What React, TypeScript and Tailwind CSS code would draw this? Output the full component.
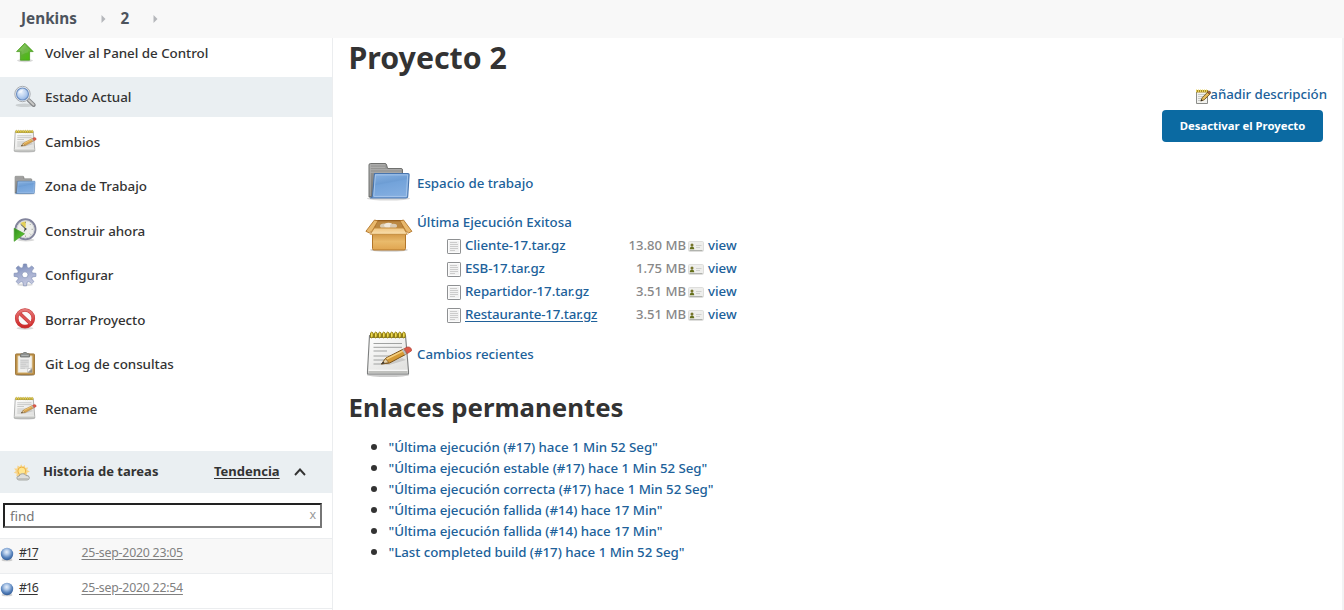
import React from "react";

type IconProps = { className?: string };

function UpArrowIcon({ className }: IconProps) {
  return (
    <svg viewBox="0 0 24 24" className={className}>
      <defs>
        <linearGradient id="up" x1="0" y1="0" x2="1" y2="1">
          <stop offset="0" stopColor="#8fd65c" />
          <stop offset="0.45" stopColor="#5fae35" />
          <stop offset="1" stopColor="#43c400" />
        </linearGradient>
      </defs>
      <ellipse cx="12" cy="20.6" rx="8" ry="1.6" fill="#000" opacity="0.15" />
      <path d="M11.8 3.2 20.2 11.6H16.6V20.2H7.4V11.6H3.6Z" fill="url(#up)" stroke="#4b9a22" strokeWidth="0.8" strokeLinejoin="round" />
      <path d="M11.8 4.8 6 10.7h2.500v4c3-1 4-2.200 7-2.500v-1.500H18Z" fill="#fff" opacity="0.12" />
    </svg>
  );
}

function SearchIcon({ className }: IconProps) {
  return (
    <svg viewBox="0 0 24 24" className={className}>
      <defs>
        <radialGradient id="lens" cx="0.4" cy="0.35" r="0.7">
          <stop offset="0" stopColor="#eaf2fd" />
          <stop offset="0.55" stopColor="#bcd2f0" />
          <stop offset="1" stopColor="#8db1e4" />
        </radialGradient>
      </defs>
      <ellipse cx="11.500" cy="20.300" rx="9" ry="1.800" fill="#000" opacity="0.13" />
      <path d="M15.500 15 20.700 20" stroke="#85878a" strokeWidth="4" strokeLinecap="round" />
      <path d="M16 15.300 20.500 19.600" stroke="#c9c9c7" strokeWidth="2" strokeLinecap="round" />
      <circle cx="9.500" cy="9" r="7.700" fill="#eef0f2" stroke="#a9adb2" strokeWidth="1" />
      <circle cx="9.500" cy="9" r="6" fill="url(#lens)" stroke="#6c8fc2" strokeWidth="1.100" />
      <path d="M5.300 8.600A4.300 4.300 0 0 1 10.500 4.800c-1 2-2.500 3.200-5.200 3.800Z" fill="#fff" opacity="0.6" />
    </svg>
  );
}

function NotepadIcon({ className, id, small }: IconProps & { id: string; small?: boolean }) {
  const rings = small ? [8, 12.5, 17, 21.500, 26, 30.500, 35, 39.500] : [8, 12, 16, 20, 24, 28, 32, 36, 40];
  return (
    <svg viewBox="0 0 48 48" className={className}>
      <defs>
        <linearGradient id={id} x1="0" y1="0" x2="0.6" y2="1">
          <stop offset="0" stopColor="#ffffff" />
          <stop offset="1" stopColor="#e2e2e0" />
        </linearGradient>
      </defs>
      <ellipse cx="23" cy="45" rx="21" ry="2" fill="#000" opacity="0.2" />
      <path
        d="M4.500 5.500H40.500L43.500 41V44H2.500V41Z"
        fill={`url(#${id})`}
        stroke={small ? "#9a9b99" : "#7c7e7e"}
        strokeWidth={small ? 1.500 : 1.100}
        strokeLinejoin="round"
      />
      <path d="M3.500 40.500H42.500V43H3.500Z" fill="#bfc0bd" />
      <path d="M3.500 40.300H42.500" stroke="#fff" strokeWidth="1" />
      <path d="M5 3.500H40.500V8H5Z" fill={small ? "#a99b4e" : "#857b35"} />
      {rings.map((x) => (
        <ellipse
          key={x}
          cx={x - 1.200}
          cy="5"
          rx={small ? 1.500 : 1.400}
          ry={small ? 2.500 : 3}
          fill="#f0dd55"
          stroke={small ? "#b09a2c" : "#8d7809"}
          strokeWidth="0.9"
        />
      ))}
      <path
        d="M8.500 13.500H37M8.500 17.300H37M8.500 21H22M8.500 26H30M8.500 30H24M8.500 34H17"
        stroke={small ? "#b9bbba" : "#a0a2a1"}
        strokeWidth={small ? 1.500 : 1}
        fill="none"
      />
      <path d="M17 34.500 37 28 41 30 24 35Z" fill="#000" opacity="0.13" />
      <path
        d="M16.500 34 21 28 38.500 19 41.500 24 24.500 33Z"
        fill={small ? "#d8a44e" : "#d59a36"}
        stroke={small ? "#a2783e" : "#79521b"}
        strokeWidth="1"
        strokeLinejoin="round"
      />
      <path d="M21.500 29 38.500 20.600" stroke="#f5d080" strokeWidth="1.600" />
      <path d="M16.500 34 20.500 28.600 23.800 32.600Z" fill="#e6d1a8" stroke="#79521b" strokeWidth="0.7" />
      <path d="M16.200 34.300 18.200 31.500 19.800 33.200Z" fill="#333" />
      <path d="M37.800 19.500 40.800 24.500" stroke="#b9bdbe" strokeWidth="2" />
      <path d="M39.200 18.600 42.500 17Q46.600 16.800 46.500 20.800L42.300 23.600Z" fill="#df5947" stroke="#b2453b" strokeWidth="0.8" />
    </svg>
  );
}

function FolderIcon({ className, id }: IconProps & { id: string }) {
  return (
    <svg viewBox="0 0 48 48" className={className}>
      <defs>
        <linearGradient id={id} x1="0" y1="0" x2="0.3" y2="1">
          <stop offset="0" stopColor="#8ab3e2" />
          <stop offset="0.45" stopColor="#6d9dd4" />
          <stop offset="0.5" stopColor="#73a3da" />
          <stop offset="1" stopColor="#82ade0" />
        </linearGradient>
        <linearGradient id={`${id}b`} x1="0" y1="0" x2="0" y2="1">
          <stop offset="0" stopColor="#9b9b99" />
          <stop offset="1" stopColor="#737472" />
        </linearGradient>
      </defs>
      <ellipse cx="23.500" cy="39.500" rx="21.500" ry="2" fill="#000" opacity="0.15" />
      <path d="M4 38V6Q4 4.500 5.500 4.500H20Q21.300 4.500 21.600 6L22.600 9.500H36Q37.500 9.500 37.500 11V38Z" fill={`url(#${id}b)`} stroke="#6f706e" strokeWidth="1" />
      <path d="M5.200 37V5.800H20.300M5.500 8.300H20.300M5.500 10.800H36.500M5.500 13.200H36.500" stroke="#bababa" strokeWidth="0.8" fill="none" />
      <path d="M9.500 14.500H42.800Q44.300 14.500 44.100 16L42.700 37.500Q42.500 39 41 39H5.500Q7.200 38.500 7.500 37Z" fill={`url(#${id})`} stroke="#4875ae" strokeWidth="1.100" strokeLinejoin="round" />
      <path d="M8.800 37 10.400 15.900H42.700L41.300 37.400H9" fill="none" stroke="#aecbee" strokeWidth="0.8" />
    </svg>
  );
}

function ClockIcon({ className }: IconProps) {
  return (
    <svg viewBox="0 0 24 24" className={className}>
      <defs>
        <linearGradient id="play" x1="0" y1="0" x2="1" y2="1">
          <stop offset="0" stopColor="#2f8e1d" />
          <stop offset="1" stopColor="#6bd337" />
        </linearGradient>
      </defs>
      <ellipse cx="13" cy="22" rx="8.500" ry="1.500" fill="#000" opacity="0.15" />
      <circle cx="12.500" cy="11.300" r="10" fill="#edeee9" stroke="#82849c" strokeWidth="1.900" />
      <circle cx="12.500" cy="11.300" r="8.600" fill="none" stroke="#c7c9cf" strokeWidth="0.8" />
      <path d="M12.500 11.300 7.500 5Q10 3.200 12.900 3.400Z" fill="#e2cf58" />
      <path d="M7.600 6.200 12.500 10.800 11.200 13.500" stroke="#4a4e50" strokeWidth="1" fill="none" />
      <circle cx="12.500" cy="11" r="1.100" fill="#44484a" />
      <path d="M12.500 3.800v1.200M19.800 11.300h-1.200M12.500 18.800v-1.200M17.700 6.100l-.8.8M17.700 16.500l-.8-.8" stroke="#888" strokeWidth="0.8" />
      <path d="M1.200 10.300 11.500 15.800 1.200 23.300Z" fill="url(#play)" stroke="#459c2b" strokeWidth="0.7" />
    </svg>
  );
}

function GearIcon({ className }: IconProps) {
  return (
    <svg viewBox="0 0 24 24" className={className}>
      <defs>
        <linearGradient id="gear" x1="0" y1="0" x2="0.3" y2="1">
          <stop offset="0" stopColor="#6c80b0" />
          <stop offset="0.4" stopColor="#98a4ca" />
          <stop offset="1" stopColor="#c3c7de" />
        </linearGradient>
      </defs>
      <ellipse cx="12" cy="21.800" rx="8" ry="1.500" fill="#000" opacity="0.13" />
      <path
        fillRule="evenodd"
        d="M9.800 4.500 10.500 1H13.500L14.200 4.500 16 5.200 18.700 2.900 20.900 5.100 18.700 8.100 19.300 10 22.900 10.300V13.400L19.400 13.900 18.600 15.800 20.900 18.600 18.700 20.700 15.900 18.500 14 19.300 13.500 22.800H10.500L10 19.300 8.100 18.500 5.300 20.700 3.100 18.600 5.400 15.800 4.600 13.900 1.100 13.400V10.300L4.700 10 5.300 8.100 3.100 5.100 5.300 2.900 8 5.200ZM15 11.800A3 3 0 1 0 9 11.800 3 3 0 1 0 15 11.800Z"
        fill="url(#gear)"
        stroke="#8390b6"
        strokeWidth="0.7"
        strokeLinejoin="round"
      />
    </svg>
  );
}

function ForbiddenIcon({ className }: IconProps) {
  return (
    <svg viewBox="0 0 24 24" className={className}>
      <defs>
        <linearGradient id="stop" x1="0" y1="0" x2="0" y2="1">
          <stop offset="0" stopColor="#e67878" />
          <stop offset="0.6" stopColor="#d84545" />
          <stop offset="1" stopColor="#cd2a2a" />
        </linearGradient>
      </defs>
      <ellipse cx="12" cy="21.300" rx="8.500" ry="1.500" fill="#000" opacity="0.15" />
      <circle cx="12" cy="11.300" r="8.300" fill="#fafafa" stroke="#c43a3a" strokeWidth="3.600" />
      <path d="M6.300 6 17.700 16.700" stroke="#c43a3a" strokeWidth="3.400" />
      <circle cx="12" cy="11.300" r="8.300" fill="none" stroke="url(#stop)" strokeWidth="2.700" />
      <path d="M6.300 6 17.700 16.700" stroke="#dc5252" strokeWidth="2.400" />
    </svg>
  );
}

function ClipboardIcon({ className }: IconProps) {
  return (
    <svg viewBox="0 0 24 24" className={className}>
      <ellipse cx="12" cy="23" rx="9.500" ry="0.9" fill="#000" opacity="0.3" />
      <rect x="2.500" y="1.900" width="19" height="20.800" rx="0.8" fill="#bc9048" stroke="#9a7334" strokeWidth="0.9" />
      <path d="M4.800 3.800H19.200V20.800H4.800Z" fill="#f1f1ef" stroke="#dcbe85" strokeWidth="0.7" />
      <path d="M7.200 7.500H16V17H7.200Z" fill="#dcdddd" />
      <path d="M7.500 8.300H15.500M7.500 10.300H15.500M7.500 12.300H13M7.500 14.300H15.500M7.500 16.300H12" stroke="#cbcccc" strokeWidth="1" />
      <path d="M19 16 14.500 20.600 14.800 16.800Z" fill="#fff" stroke="#b0b0b0" strokeWidth="0.6" />
      <path d="M19.200 16.400V20.800H14.800Z" fill="#8f8d87" />
      <path d="M7.500 5V2.500Q7.500 1.700 8.300 1.700H9.800Q10 .4 12 .4T14.200 1.700H15.700Q16.500 1.700 16.500 2.500V5Z" fill="#8f9291" stroke="#6f7270" strokeWidth="0.8" />
      <path d="M8.500 3.500H15.500" stroke="#bfc1c0" strokeWidth="0.7" />
    </svg>
  );
}

function BoxIcon({ className }: IconProps) {
  return (
    <svg viewBox="0 0 48 36" className={className}>
      <defs>
        <linearGradient id="boxFront" x1="0" y1="0" x2="0" y2="1">
          <stop offset="0" stopColor="#c98b38" />
          <stop offset="0.55" stopColor="#e9ba6b" />
          <stop offset="1" stopColor="#e0a550" />
        </linearGradient>
        <linearGradient id="boxFlap" x1="0" y1="0" x2="0" y2="1">
          <stop offset="0" stopColor="#efc581" />
          <stop offset="1" stopColor="#f9dfae" />
        </linearGradient>
      </defs>
      <ellipse cx="24" cy="34" rx="19" ry="1.700" fill="#000" opacity="0.18" />
      <path d="M7.500 15H40.500V32.500Q40.500 34 39 34H9Q7.500 34 7.500 32.500Z" fill="url(#boxFront)" stroke="#b2762a" strokeWidth="1" />
      <path d="M10.500 4.500H37.500L41.500 14.500H6.500Z" fill="#a8712c" stroke="#97601f" strokeWidth="1" />
      <path d="M12 5.500H36L38 12H10Z" fill="#bb8842" />
      <ellipse cx="19" cy="10" rx="4" ry="2.500" fill="#d9cbb2" />
      <ellipse cx="23.500" cy="9.300" rx="4.300" ry="2.600" fill="#efe7d9" />
      <ellipse cx="28.500" cy="10" rx="3.500" ry="2.300" fill="#dacbb3" />
      <path d="M9.500 4 13 5 7.500 14.500 4.500 17 0.900 15.300Z" fill="#e9b96d" stroke="#b2762a" strokeWidth="0.9" strokeLinejoin="round" />
      <path d="M38.500 4 35 5 40.500 14.500 43.500 17 46.900 15.300Z" fill="#e9b96d" stroke="#b2762a" strokeWidth="0.9" strokeLinejoin="round" />
      <path d="M9.300 12H38.500L42.300 18.300H5.300Z" fill="url(#boxFlap)" stroke="#c28a3c" strokeWidth="0.9" strokeLinejoin="round" />
    </svg>
  );
}

function FileIcon({ className }: IconProps) {
  return (
    <svg viewBox="0 0 16 16" className={className}>
      <rect x="1.500" y="1.500" width="13" height="14" rx="0.6" fill="#f2f2f2" stroke="#8e9092" />
      <rect x="2.500" y="2.500" width="11" height="12" fill="none" stroke="#fcfcfc" />
      <path d="M4 4.500H11M4 6.500H12M4 8.500H12M4 10.500H12M4 12.500H9" stroke="#cccccc" />
    </svg>
  );
}

function BadgeIcon({ className }: IconProps) {
  return (
    <svg viewBox="0 0 16 16" className={className}>
      <rect x="0.500" y="3.500" width="15" height="10" rx="1.200" fill="#eeeeec" stroke="#dededc" />
      <circle cx="4" cy="7" r="1.500" fill="#77752c" />
      <path d="M1.800 11.300Q1.800 8.500 4 8.500T6.200 11.300Z" fill="#65701c" />
      <path d="M8 7.500H13.500M8 9.500H12" stroke="#d0d1ce" />
      <path d="M1.500 12.500H14.500" stroke="#b1b3ae" />
    </svg>
  );
}

function EditNoteIcon({ className }: IconProps) {
  return (
    <svg viewBox="0 0 16 16" className={className}>
      <path d="M1.500 3.500H12.500V15.500H1.500Z" fill="#f2f2ef" stroke="#8b8c89" />
      <path d="M1 2H13V4.500H1Z" fill="#a98b22" />
      <path d="M1.500 1.500V4M3.500 1.500V4M5.500 1.500V4M7.500 1.500V4M9.500 1.500V4M11.500 1.500V4" stroke="#e8d360" />
      <path d="M3 6.500H10M3 8.500H8M3 10.500H6M3 12.500H5" stroke="#c8cac7" />
      <path d="M5.800 13 7.200 9.700 12.600 4.200 14.800 6.300 9.200 11.800Z" fill="#e4b95c" stroke="#6c501a" strokeWidth="0.9" />
      <path d="M5.600 13.300 6.500 11.200 7.700 12.400Z" fill="#222" />
      <path d="M12.300 4.200 13.600 3Q15.600 2.800 15.700 5L14.700 6.200Z" fill="#a8663b" stroke="#5f3d21" strokeWidth="0.6" />
    </svg>
  );
}

function WeatherIcon({ className }: IconProps) {
  return (
    <svg viewBox="0 0 16 16" className={className}>
      <path d="M7.700 0.300 9 2.600 11.200 1 11.400 3.600 14.300 3.200 13.200 5.600 15.900 7 13.300 8.200 13 11 3 11.500 3.600 9.200.8 8.300 2.800 6.600 1 4.200 4 4.200 4.200 1.500 6.400 2.700Z" fill="#f7d48a" />
      <circle cx="8.300" cy="6.600" r="3.700" fill="#ffe690" stroke="#e9ae40" strokeWidth="0.9" />
      <path d="M5.500 15Q3.600 14.800 3.700 13 3.900 11.300 5.800 11.300 6.600 8.800 9 9.200 10.900 8.600 12.100 10.800 15.300 10.400 15.400 13 15.200 15 13.300 15Z" fill="#dededb" stroke="#9b9d9a" strokeWidth="0.9" />
      <path d="M5 13.800H14" stroke="#bbbcb9" />
    </svg>
  );
}

function BallIcon({ className, id }: IconProps & { id: string }) {
  return (
    <svg viewBox="0 0 16 16" className={className}>
      <defs>
        <radialGradient id={id} cx="0.47" cy="0.34" r="0.66">
          <stop offset="0" stopColor="#e8f0fa" />
          <stop offset="0.3" stopColor="#b2cae9" />
          <stop offset="0.7" stopColor="#5581bb" />
          <stop offset="1" stopColor="#315a94" />
        </radialGradient>
      </defs>
      <ellipse cx="8" cy="14" rx="5.500" ry="1.300" fill="#000" opacity="0.18" />
      <circle cx="8" cy="8" r="6.200" fill={`url(#${id})`} />
    </svg>
  );
}

const tasks = [
  { label: "Volver al Panel de Control", icon: <UpArrowIcon className="size-6" /> },
  { label: "Estado Actual", icon: <SearchIcon className="size-6" />, active: true },
  { label: "Cambios", icon: <NotepadIcon id="np1" small className="size-6" /> },
  { label: "Zona de Trabajo", icon: <FolderIcon id="fd1" className="size-6" /> },
  { label: "Construir ahora", icon: <ClockIcon className="size-6" /> },
  { label: "Configurar", icon: <GearIcon className="size-6" /> },
  { label: "Borrar Proyecto", icon: <ForbiddenIcon className="size-6" /> },
  { label: "Git Log de consultas", icon: <ClipboardIcon className="size-6" /> },
  { label: "Rename", icon: <NotepadIcon id="np2" small className="size-6" /> },
];

const builds = [
  { id: "#17", date: "25-sep-2020 23:05", shaded: true },
  { id: "#16", date: "25-sep-2020 22:54", shaded: false },
];

const artifacts = [
  { name: "Cliente-17.tar.gz", size: "13.80 MB" },
  { name: "ESB-17.tar.gz", size: "1.75 MB" },
  { name: "Repartidor-17.tar.gz", size: "3.51 MB" },
  { name: "Restaurante-17.tar.gz", size: "3.51 MB", hovered: true },
];

const permalinks = [
  '"Última ejecución (#17) hace 1 Min 52 Seg"',
  '"Última ejecución estable (#17) hace 1 Min 52 Seg"',
  '"Última ejecución correcta (#17) hace 1 Min 52 Seg"',
  '"Última ejecución fallida (#14) hace 17 Min"',
  '"Última ejecución fallida (#14) hace 17 Min"',
  '"Last completed build (#17) hace 1 Min 52 Seg"',
];

function Separator() {
  return (
    <svg viewBox="0 0 5 8" className="h-2 w-[5px]">
      <path d="M0.500 0 4.500 4 0.500 8Z" fill="#b5b7bb" />
    </svg>
  );
}

function Breadcrumbs() {
  return (
    <nav className="flex h-[38px] shrink-0 items-center bg-[#f8f8f8] pb-px pl-[21px] text-[15.3px] font-bold text-[#4d545d]">
      <a className="w-[79.5px]">Jenkins</a>
      <Separator />
      <a className="ml-[15px] w-8">2</a>
      <Separator />
    </nav>
  );
}

function Sidebar() {
  return (
    <aside className="flex w-[333px] shrink-0 flex-col border-r border-[#ebedef]">
      <ul className="-mt-[5.6px] flex h-[418.6px] flex-col gap-[4.5px]">
        {tasks.map((t) => (
          <li
            key={t.label}
            className={`flex h-10 shrink-0 items-center gap-2 pl-[13px] text-[13.4px] font-medium tracking-[-0.04px] text-[#333] ${t.active ? "bg-[#eaeff2]" : ""}`}
          >
            {t.icon}
            <span className="pt-px">{t.label}</span>
          </li>
        ))}
      </ul>
      <div className="flex h-[42px] shrink-0 items-center bg-[#eaeff2] pl-[13px] text-[13px] font-bold text-[#333]">
        <WeatherIcon className="size-[17px]" />
        <span className="ml-[13px] w-[171px]">Historia de tareas</span>
        <a className="underline underline-offset-2">Tendencia</a>
        <svg viewBox="0 0 12 8" className="ml-3.5 h-2 w-3">
          <path d="M1 7 6 1.500 11 7" fill="none" stroke="#333" strokeWidth="1.900" />
        </svg>
      </div>
      <div className="flex h-[46px] shrink-0 items-center border-b border-[#ebedef] pl-[3px]">
        <div className="flex h-[25px] w-[319px] items-center justify-between border-2 border-t-[#222] border-r-[#767676] border-b-[#767676] border-l-[#222] bg-white pr-1 pl-[5px] text-[13.3px] text-[#757575]">
          <span className="pt-0.5">find</span>
          <span className="text-[12.5px] text-[#999]">x</span>
        </div>
      </div>
      {builds.map((b) => (
        <div
          key={b.id}
          className={`flex h-[35px] shrink-0 items-center border-b border-[#ebedef] pb-[5px] text-[12.3px] ${b.shaded ? "bg-[#f8f8f8]" : ""}`}
        >
          <BallIcon id={b.shaded ? "ballA" : "ballB"} className="-ml-px size-4" />
          <a className="ml-1 w-[62.5px]">
            <span className="tracking-[-1.100px] text-[#333] underline underline-offset-2">{b.id}</span>
          </a>
          <a className="tracking-[-0.22px] text-[#808080] underline underline-offset-2">{b.date}</a>
        </div>
      ))}
    </aside>
  );
}

function Artifacts() {
  return (
    <div className="flex flex-col">
      {artifacts.map((a) => (
        <div key={a.name} className="flex h-[23px] items-center pl-[29px] text-[13.3px]">
          <FileIcon className="mt-px size-4" />
          <span className="ml-[3px] w-[150px] font-medium tracking-[-0.08px] text-[#20619a]">
            <a className={a.hovered ? "tracking-[-0.13px] underline underline-offset-2" : ""}>{a.name}</a>
          </span>
          <span className="w-[71px] text-right text-[13.1px] text-[#888]">{a.size}</span>
          <BadgeIcon className="ml-0.5 size-4" />
          <a className="ml-1 font-medium text-[#20619a]">view</a>
        </div>
      ))}
    </div>
  );
}

function Main() {
  return (
    <main className="flex min-w-0 flex-1 flex-col border-r-2 border-[#f2f3f4] pl-[15.5px]">
      <h1 className="flex h-10 items-center text-[30.3px] font-bold text-[#333]">Proyecto 2</h1>
      <div className="flex flex-col items-end">
        <a className="mt-[7px] flex h-5 items-center pr-[15px] text-[13.3px] font-medium tracking-[-0.04px] text-[#20619a]">
          <EditNoteIcon className="-mr-px mt-0.5 size-4" />
          añadir descripción
        </a>
        <button className="mt-[5px] mr-[19px] h-8 w-[161px] rounded bg-[#0b6aa2] pt-px text-[11.3px] font-bold text-white">
          Desactivar el Proyecto
        </button>
      </div>
      <section className="mt-4 flex flex-col pl-[16.5px] text-[13.3px] font-medium text-[#20619a]">
        <div className="flex h-[50px] items-center gap-1">
          <FolderIcon id="fd2" className="size-12" />
          <a className="pt-0.5">Espacio de trabajo</a>
        </div>
        <div className="mt-[3px] flex items-start gap-1">
          <BoxIcon className="mt-[5px] h-9 w-12" />
          <div>
            <a className="flex h-[23px] items-center">Última Ejecución Exitosa</a>
            <Artifacts />
          </div>
        </div>
        <div className="mt-[4px] flex h-12 items-center gap-1">
          <NotepadIcon id="np3" className="size-12" />
          <a className="pt-0.5">Cambios recientes</a>
        </div>
      </section>
      <h2 className="mt-[9px] flex h-10 items-center text-[25.8px] font-bold text-[#333]">Enlaces permanentes</h2>
      <ul className="mt-[10px] text-[13.3px] font-medium tracking-[-0.03px] text-[#20619a]">
        {permalinks.map((p, i) => (
          <li key={i} className="flex h-[21px] items-center pl-[22px]">
            <span className="mr-3 mb-px size-[6px] rounded-full bg-[#333]" />
            <a>{p}</a>
          </li>
        ))}
      </ul>
    </main>
  );
}

export default function App() {
  return (
    <div className="flex h-[610px] w-full flex-col overflow-hidden bg-white font-['Noto_Sans','Open_Sans',sans-serif] whitespace-nowrap">
      <Breadcrumbs />
      <div className="flex min-h-0 flex-1">
        <Sidebar />
        <Main />
      </div>
    </div>
  );
}
